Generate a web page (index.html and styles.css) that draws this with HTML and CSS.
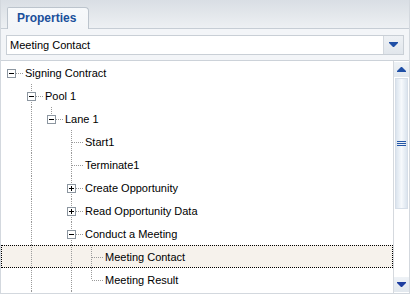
FILE: index.html
```html
<!DOCTYPE html>
<html>
<head>
<meta charset="utf-8">
<link rel="stylesheet" href="styles.css">
</head>
<body>
<div class="frame">
  <div class="tabstrip">
    <div class="tab">Properties</div>
  </div>
  <div class="panel">
    <div class="combo">
      <div class="combo-text">Meeting Contact</div>
      <div class="combo-btn">
        <svg width="9" height="6" viewBox="0 0 9 6"><polygon points="0,0 9,0 9,1 5,5 4,5 0,1" fill="#1f4fa6"/></svg>
      </div>
    </div>
  </div>
  <div class="tree">
    <div class="tree-body">
      <div class="row">
        <span class="c n root"><span class="box minus"></span></span>
        <span class="label">Signing Contract</span>
      </div>
      <div class="row">
        <span class="c"></span>
        <span class="c n"><span class="box minus"></span></span>
        <span class="label">Pool 1</span>
      </div>
      <div class="row">
        <span class="c"></span>
        <span class="c v"></span>
        <span class="c n last"><span class="box minus"></span></span>
        <span class="label">Lane 1</span>
      </div>
      <div class="row">
        <span class="c"></span>
        <span class="c v"></span>
        <span class="c"></span>
        <span class="c n"></span>
        <span class="label">Start1</span>
      </div>
      <div class="row">
        <span class="c"></span>
        <span class="c v"></span>
        <span class="c"></span>
        <span class="c n"></span>
        <span class="label">Terminate1</span>
      </div>
      <div class="row">
        <span class="c"></span>
        <span class="c v"></span>
        <span class="c"></span>
        <span class="c n"><span class="box plus"></span></span>
        <span class="label">Create Opportunity</span>
      </div>
      <div class="row">
        <span class="c"></span>
        <span class="c v"></span>
        <span class="c"></span>
        <span class="c n"><span class="box plus"></span></span>
        <span class="label">Read Opportunity Data</span>
      </div>
      <div class="row">
        <span class="c"></span>
        <span class="c v"></span>
        <span class="c"></span>
        <span class="c n"><span class="box minus"></span></span>
        <span class="label">Conduct a Meeting</span>
      </div>
      <div class="row selected">
        <span class="c"></span>
        <span class="c v"></span>
        <span class="c"></span>
        <span class="c v"></span>
        <span class="c n"></span>
        <span class="label">Meeting Contact</span>
      </div>
      <div class="row">
        <span class="c"></span>
        <span class="c v"></span>
        <span class="c"></span>
        <span class="c v"></span>
        <span class="c n last"></span>
        <span class="label">Meeting Result</span>
      </div>
      <div class="row">
        <span class="c"></span>
        <span class="c v"></span>
        <span class="c"></span>
        <span class="c v"></span>
      </div>
    </div>
    <div class="scrollbar">
      <div class="sb-btn">
        <svg width="9" height="5" viewBox="0 0 9 5"><polygon points="4,0 5,0 9,4 9,5 0,5 0,4" fill="#1f4fa6"/></svg>
      </div>
      <div class="thumb">
        <div class="grip"></div>
        <div class="grip"></div>
        <div class="grip"></div>
      </div>
      <div class="sb-track"></div>
      <div class="sb-btn">
        <svg width="9" height="5" viewBox="0 0 9 5"><polygon points="0,0 9,0 9,1 5,5 4,5 0,1" fill="#1f3fa0"/></svg>
      </div>
    </div>
  </div>
</div>
</body>
</html>
```
FILE: styles.css
```css
html, body {
  margin: 0;
  padding: 0;
  background: #ffffff;
}
body {
  font-family: "Liberation Sans", Arial, sans-serif;
  font-size: 11px;
  color: #000;
}
.frame {
  width: 410px;
  height: 294px;
  box-sizing: border-box;
  border-left: 1px solid #d3d8de;
  border-right: 1px solid #d3d8de;
  border-bottom: 1px solid #d3d8de;
  display: flex;
  flex-direction: column;
  overflow: hidden;
}
.tabstrip {
  height: 29px;
  box-sizing: border-box;
  flex: none;
  padding: 7px 0 0 6px;
  border-bottom: 1px solid #c6cdd5;
  background: linear-gradient(to bottom, #d9dee4, #edf0f3);
  display: flex;
  align-items: flex-start;
}
.tab {
  width: 82px;
  height: 22px;
  box-sizing: border-box;
  margin-bottom: -1px;
  border: 1px solid #bcc4cd;
  border-bottom: none;
  border-radius: 2px 4px 0 0;
  background: linear-gradient(to bottom, #f7f9fb, #f3f5f8);
  padding-left: 9px;
  font-weight: bold;
  font-size: 12px;
  line-height: 21px;
  color: #1a4f9b;
}
.panel {
  flex: none;
  height: 31px;
  box-sizing: border-box;
  padding: 6px 5px 5px 5px;
  background: #f3f5f8;
}
.combo {
  height: 20px;
  box-sizing: border-box;
  border: 1px solid #c9cfd6;
  background: #fff;
  display: flex;
}
.combo-text {
  flex: 1;
  padding-left: 3px;
  line-height: 18px;
}
.combo-btn {
  width: 19px;
  border-left: 1px solid #d3d8de;
  background: linear-gradient(to bottom, #eef1f5, #e1e6ec);
  display: flex;
  align-items: center;
  justify-content: center;
}
.tree {
  flex: 1;
  border-top: 1px solid #ccd2d9;
  display: flex;
  min-height: 0;
  background: #fff;
}
.tree-body {
  flex: 1;
  overflow: hidden;
}
.row {
  height: 23px;
  display: flex;
  box-sizing: border-box;
}
.row.selected {
  background: #f6f2ec;
  outline: 1px dotted #000;
  outline-offset: -1px;
}
.c {
  width: 20px;
  height: 23px;
  flex: none;
  position: relative;
}
.c.v::before,
.c.n::before {
  content: "";
  position: absolute;
  left: 10px;
  top: 0;
  width: 1px;
  height: 23px;
  background: repeating-linear-gradient(to bottom, #9a9a9a 0 1px, transparent 1px 2px);
}
.c.n.last::before {
  height: 12px;
}
.c.n.root::before {
  display: none;
}
.c.n::after {
  content: "";
  position: absolute;
  left: 11px;
  top: 12px;
  width: 12px;
  height: 1px;
  background: repeating-linear-gradient(to right, #9a9a9a 0 1px, transparent 1px 2px);
}
.box {
  position: absolute;
  z-index: 1;
  left: 6px;
  top: 8px;
  width: 9px;
  height: 9px;
  box-sizing: border-box;
  border: 1px solid #8c96a0;
  background: #fff;
}
.box::before {
  content: "";
  position: absolute;
  left: 1px;
  top: 3px;
  width: 5px;
  height: 1px;
  background: #000;
}
.box.plus::after {
  content: "";
  position: absolute;
  left: 3px;
  top: 1px;
  width: 1px;
  height: 5px;
  background: #000;
}
.label {
  padding-left: 4px;
  line-height: 24px;
  white-space: nowrap;
}
.scrollbar {
  width: 16px;
  flex: none;
  box-sizing: border-box;
  border-left: 1px solid #d5d9de;
  padding: 1px 0;
  display: flex;
  flex-direction: column;
  background: #fff;
}
.sb-btn {
  height: 15px;
  flex: none;
  background: linear-gradient(to bottom, #eef2f6, #e2e8ee);
  display: flex;
  align-items: center;
  justify-content: center;
}
.thumb {
  height: 131px;
  flex: none;
  margin: 1px 1px 0 1px;
  box-sizing: border-box;
  border: 1px solid #d6dee8;
  background: linear-gradient(to right, #dbe4ee, #f6f9fc 50%, #dbe4ee);
  display: flex;
  flex-direction: column;
  align-items: center;
  justify-content: center;
  gap: 1px;
}
.grip {
  width: 9px;
  height: 1px;
  background: #2456a6;
}
.sb-track {
  flex: 1;
}
```
